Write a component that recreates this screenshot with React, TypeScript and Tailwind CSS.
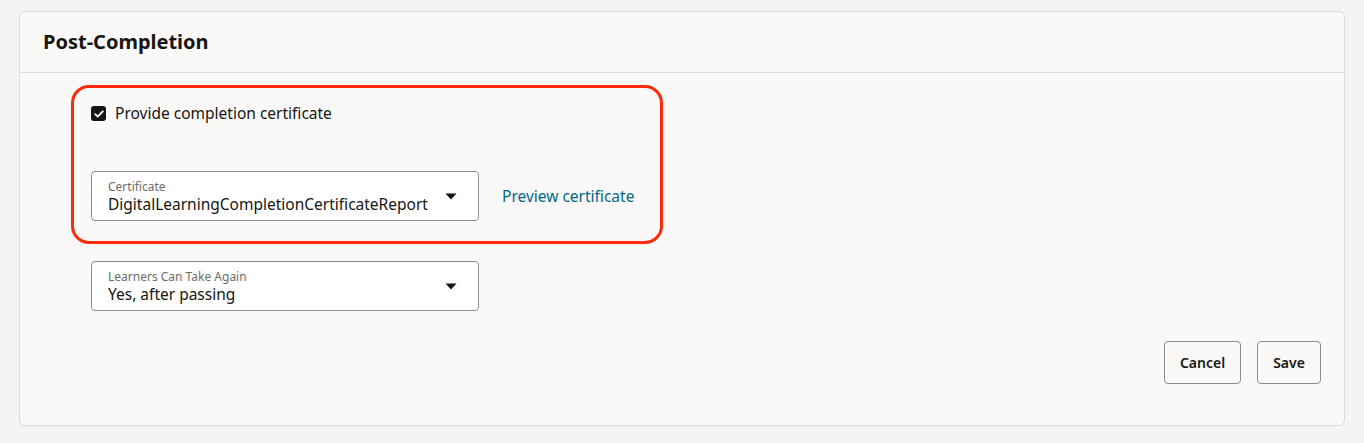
import React from "react";

const font = { fontFamily: '"Noto Sans", "Open Sans", Arial, sans-serif' };

function Caret() {
  return (
    <svg width="12" height="7" viewBox="0 0 12 7" className="shrink-0">
      <path d="M0.5 0.5h11L6 6.5z" fill="#161513" />
    </svg>
  );
}

function SelectField({ label, value }: { label: string; value: string }) {
  return (
    <div className="flex h-[50px] w-[388px] items-center rounded-[4px] border border-[#8f8c88] bg-white pl-[16px] pr-[21px]">
      <div className="flex min-w-0 flex-1 flex-col leading-none">
        <span className="text-[12px] leading-[15px] text-[#6f6c67]">{label}</span>
        <span className="overflow-hidden whitespace-nowrap text-[15.5px] leading-[20px] text-[#161513]">{value}</span>
      </div>
      <div className="ml-[14px]">
        <Caret />
      </div>
    </div>
  );
}

export default function App() {
  return (
    <div className="min-h-[443px] bg-[#f5f4f2] px-[19px] pt-[11px]" style={font}>
      <div className="w-[1326px] rounded-[6px] border border-[#dedcd9] bg-[#faf9f8]">
        <div className="flex h-[61px] items-center border-b border-[#dedcd9] pl-[23px]">
          <h2 className="text-[20px] font-bold text-[#161513]">Post-Completion</h2>
        </div>
        <div className="px-[51px] pt-[12px]">
          <div className="w-[592px] rounded-[18px] border-[3px] border-[#ff2a0a] pb-[20px] pl-[17px] pt-[14px]">
            <label className="flex items-center gap-[9px] text-[15.5px] text-[#161513]">
              <span className="flex h-[15px] w-[15px] items-center justify-center rounded-[3px] bg-[#161513]">
                <svg width="10" height="8" viewBox="0 0 10 8">
                  <path d="M1.2 4.2l2.5 2.4L8.8 1.4" fill="none" stroke="white" strokeWidth="1.8" strokeLinecap="round" strokeLinejoin="round" />
                </svg>
              </span>
              Provide completion certificate
            </label>
            <div className="mt-[46px] flex items-center gap-[23px]">
              <SelectField label="Certificate" value="DigitalLearningCompletionCertificateReport" />
              <a className="text-[15.5px] text-[#00688c]">Preview certificate</a>
            </div>
          </div>
          <div className="mt-[17px] pl-[20px]">
            <SelectField label="Learners Can Take Again" value="Yes, after passing" />
          </div>
        </div>
        <div className="flex justify-end gap-[16px] pb-[41px] pr-[23px] pt-[30px]">
          <button className="h-[43px] w-[77px] rounded-[4px] border border-[#8f8c88] text-[14px] font-semibold text-[#161513]">
            Cancel
          </button>
          <button className="h-[43px] w-[64px] rounded-[4px] border border-[#8f8c88] text-[14px] font-semibold text-[#161513]">
            Save
          </button>
        </div>
      </div>
    </div>
  );
}
